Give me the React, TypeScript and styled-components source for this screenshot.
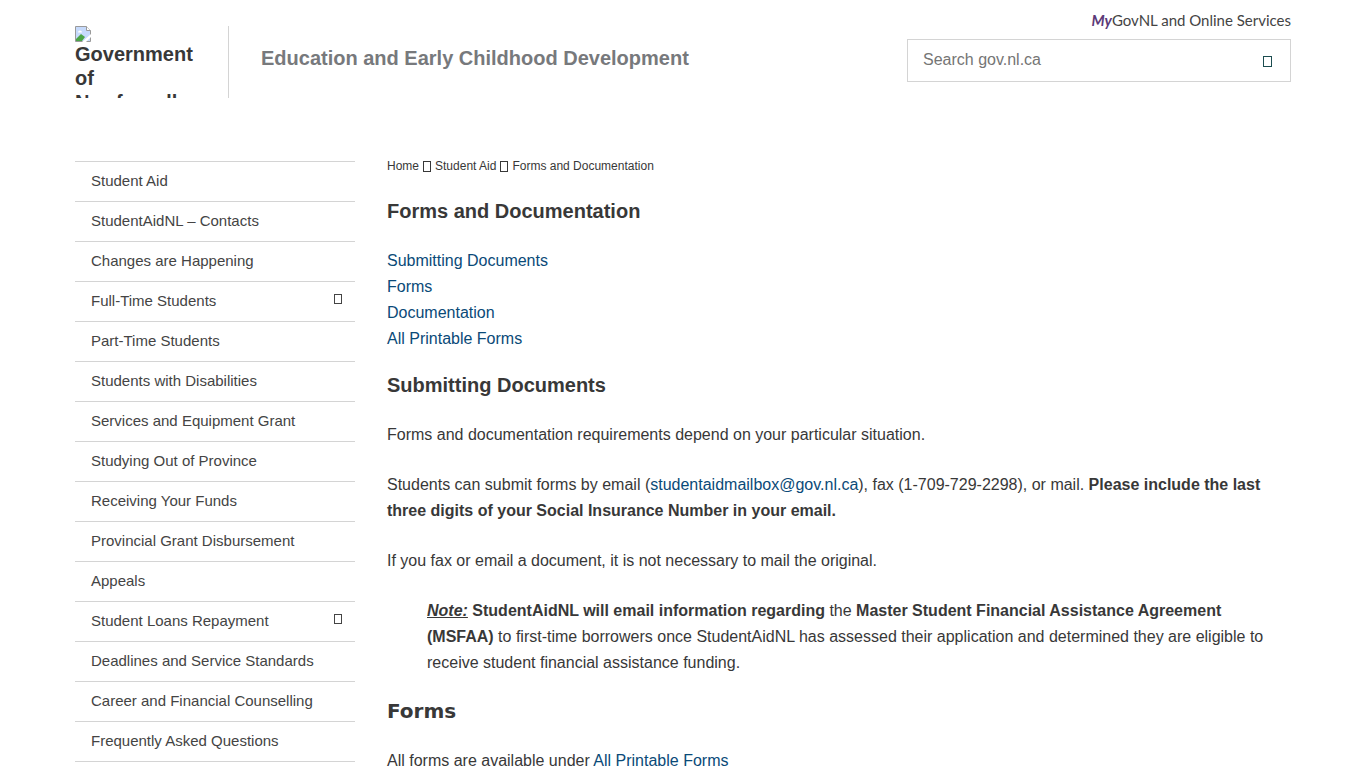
import React from "react";
import styled, { createGlobalStyle } from "styled-components";

const GlobalStyle = createGlobalStyle`
  * { box-sizing: border-box; }
  body {
    margin: 0;
    background: #fff;
    color: #383838;
    font-family: "Liberation Sans", Arial, sans-serif;
    font-size: 16px;
    line-height: 26px;
  }
  a { color: #0a4a78; text-decoration: none; }
`;

const Page = styled.div`
  padding: 0 75px;
  height: 100vh;
  overflow: hidden;
`;

const Header = styled.header`
  display: flex;
  justify-content: space-between;
  height: 161px;
`;

const Brand = styled.div`
  display: flex;
  height: 98px;
  padding-top: 26px;
`;

const LogoLink = styled.a`
  display: block;
  width: 154px;
  padding-right: 24px;
  border-right: 1px solid #d4d4d4;
  overflow: hidden;
  color: #383838;
  font-size: 20px;
  font-weight: bold;
  line-height: 24px;
`;

const LogoIcon = styled.svg`
  display: block;
`;

const LogoText = styled.span`
  display: block;
  overflow: hidden;
`;

const Department = styled.a`
  padding: 20px 0 0 32px;
  color: #77797c;
  font-size: 20px;
  font-weight: bold;
  line-height: 24px;
`;

const Tools = styled.div`
  width: 384px;
  padding-top: 8px;
`;

const ServicesLink = styled.a`
  display: block;
  height: 31px;
  color: #444;
  font-family: Lato, sans-serif;
  font-size: 15px;
  line-height: 24px;
  text-align: right;
`;

const My = styled.em`
  color: #5c3a78;
  font-weight: bold;
`;

const SearchForm = styled.form`
  display: flex;
  align-items: center;
  height: 43px;
  padding: 0 16px 2px 15px;
  border: 1px solid #d4d4d4;
`;

const SearchInput = styled.input`
  flex: 1;
  min-width: 0;
  padding: 0;
  border: 0;
  background: transparent;
  font: inherit;
  color: #383838;
  &::placeholder { color: #757575; opacity: 1; }
`;

const SearchButton = styled.button`
  display: flex;
  padding: 4px 2px 0;
  border: 0;
  background: transparent;
  color: #1c4d50;
`;

const Columns = styled.div`
  display: flex;
  gap: 32px;
`;

const Sidebar = styled.nav`
  flex: 0 0 280px;
`;

const Menu = styled.ul`
  margin: 0;
  padding: 0;
  list-style: none;
  border-bottom: 1px solid #d4d4d4;
`;

const MenuItem = styled.li`
  border-top: 1px solid #d4d4d4;
`;

const MenuLink = styled.a`
  display: flex;
  align-items: center;
  justify-content: space-between;
  height: 39px;
  padding: 0 13px 2px 16px;
  color: #444;
  font-size: 15px;
  line-height: 24px;
  svg { margin-bottom: 4px; }
`;

const Content = styled.main`
  flex: 1;
  min-width: 0;
  padding-right: 16px;
`;

const Breadcrumb = styled.nav`
  display: flex;
  align-items: center;
  gap: 4px;
  height: 10px;
  font-size: 12px;
  a { color: #383838; }
`;

const Heading = styled.h2<{ $heavy?: boolean }>`
  margin: 0 0 24px;
  font-family: ${(p) => (p.$heavy ? '"DejaVu Sans", sans-serif' : "inherit")};
  font-size: 20px;
  font-weight: bold;
  line-height: 26px;
`;

const PageHeading = styled(Heading)`
  margin-top: 27px;
`;

const LinkList = styled.ul`
  margin: 0 0 20px;
  padding: 0;
  list-style: none;
`;

const Paragraph = styled.p`
  margin: 0 0 24px;
`;

const Note = styled.blockquote`
  margin: 0 0 22px;
  padding-left: 40px;
`;

const NoteLabel = styled.em`
  text-decoration: underline;
`;

const Glyph = ({ w, h }: { w: number; h: number }) => (
  <svg width={w} height={h} viewBox={`0 0 ${w} ${h}`} aria-hidden="true">
    <rect x="0.5" y="0.5" width={w - 1} height={h - 1} fill="none" stroke="currentColor" />
  </svg>
);

const menu: { label: string; expandable?: boolean }[] = [
  { label: "Student Aid" },
  { label: "StudentAidNL – Contacts" },
  { label: "Changes are Happening" },
  { label: "Full-Time Students", expandable: true },
  { label: "Part-Time Students" },
  { label: "Students with Disabilities" },
  { label: "Services and Equipment Grant" },
  { label: "Studying Out of Province" },
  { label: "Receiving Your Funds" },
  { label: "Provincial Grant Disbursement" },
  { label: "Appeals" },
  { label: "Student Loans Repayment", expandable: true },
  { label: "Deadlines and Service Standards" },
  { label: "Career and Financial Counselling" },
  { label: "Frequently Asked Questions" },
];

const sections = ["Submitting Documents", "Forms", "Documentation", "All Printable Forms"];

export default function App() {
  return (
    <Page>
      <GlobalStyle />
      <Header>
        <Brand>
          <LogoLink href="#">
            <LogoIcon width="16" height="16" viewBox="0 0 16 16" aria-hidden="true">
              <path d="M.5.5h11l4 4v11H.5z" fill="#c6dafc" stroke="#9a9a9a" />
              <path d="M11.500.5v4h4" fill="#fff" stroke="#9a9a9a" />
              <path d="M3 6.500a2 2 0 0 1 4 0z" fill="#fff" />
              <path d="M1 13l5-5 4 3-3 4H1z" fill="#4ba547" />
              <path d="M7 16L16 8v3l-5 5z" fill="#fff" />
            </LogoIcon>
            <LogoText>Government of Newfoundland and Labrador</LogoText>
          </LogoLink>
          <Department href="#">Education and Early Childhood Development</Department>
        </Brand>
        <Tools>
          <ServicesLink href="#">
            <My>My</My>GovNL and Online Services
          </ServicesLink>
          <SearchForm role="search">
            <SearchInput type="text" placeholder="Search gov.nl.ca" aria-label="Search gov.nl.ca" />
            <SearchButton type="button" aria-label="Search">
              <Glyph w={9} h={11} />
            </SearchButton>
          </SearchForm>
        </Tools>
      </Header>
      <Columns>
        <Sidebar aria-label="Student Aid">
          <Menu>
            {menu.map((item) => (
              <MenuItem key={item.label}>
                <MenuLink href="#">
                  {item.label}
                  {item.expandable && <Glyph w={8} h={10} />}
                </MenuLink>
              </MenuItem>
            ))}
          </Menu>
        </Sidebar>
        <Content>
          <Breadcrumb aria-label="Breadcrumb">
            <a href="#">Home</a>
            <Glyph w={8} h={11} />
            <a href="#">Student Aid</a>
            <Glyph w={8} h={11} />
            <span>Forms and Documentation</span>
          </Breadcrumb>
          <PageHeading as="h1">Forms and Documentation</PageHeading>
          <LinkList>
            {sections.map((label) => (
              <li key={label}>
                <a href="#">{label}</a>
              </li>
            ))}
          </LinkList>
          <Heading>Submitting Documents</Heading>
          <Paragraph>Forms and documentation requirements depend on your particular situation.</Paragraph>
          <Paragraph>
            Students can submit forms by email (<a href="mailto:studentaidmailbox@gov.nl.ca">studentaidmailbox@gov.nl.ca</a>),
            fax (1-709-729-2298), or mail.{" "}
            <strong>Please include the last three digits of your Social Insurance Number in your email.</strong>
          </Paragraph>
          <Paragraph>If you fax or email a document, it is not necessary to mail the original.</Paragraph>
          <Note>
            <strong>
              <NoteLabel>Note:</NoteLabel> StudentAidNL will email information regarding
            </strong>{" "}
            the <strong>Master Student Financial Assistance Agreement (MSFAA)</strong> to first-time borrowers once
            StudentAidNL has assessed their application and determined they are eligible to receive student financial
            assistance funding.
          </Note>
          <Heading $heavy>Forms</Heading>
          <Paragraph>
            All forms are available under <a href="#">All Printable Forms</a>
          </Paragraph>
        </Content>
      </Columns>
    </Page>
  );
}
